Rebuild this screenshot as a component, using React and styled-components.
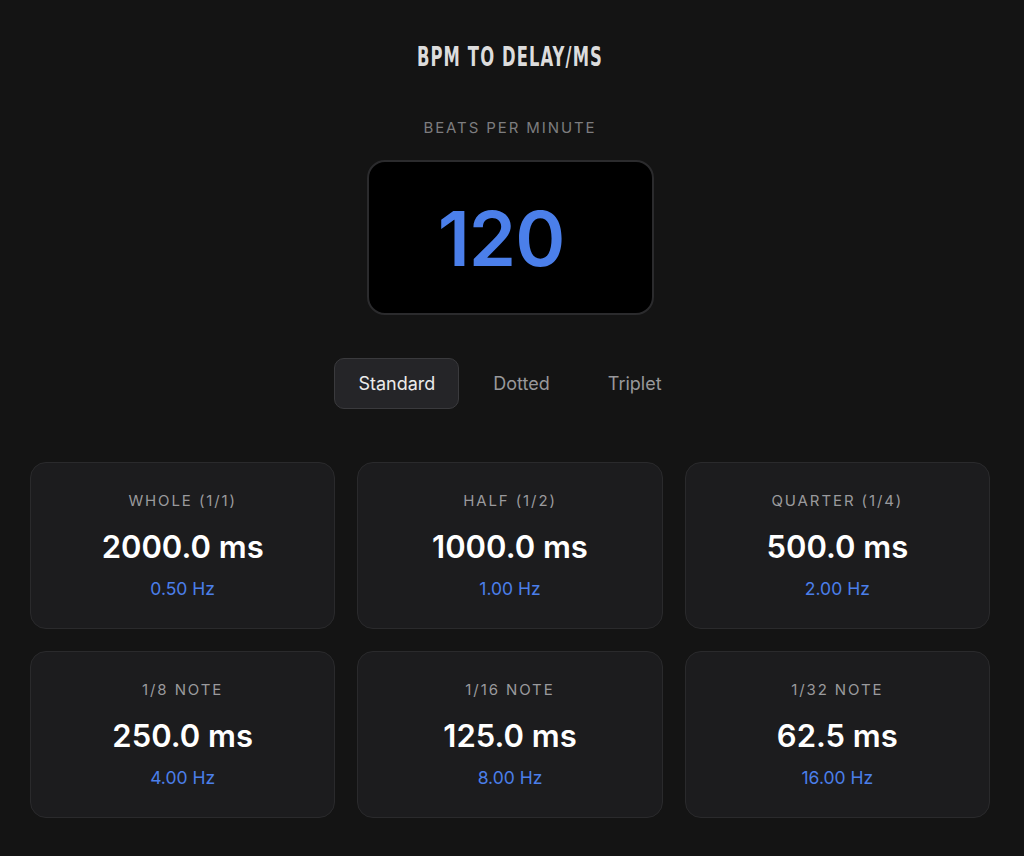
import React, { useState } from "react";
import styled, { createGlobalStyle } from "styled-components";

const GlobalStyle = createGlobalStyle`
  html, body {
    margin: 0;
    padding: 0;
    background: #141414;
  }
  body {
    font-family: Inter, "Noto Sans", sans-serif;
    color: #fff;
  }
`;

const Page = styled.div`
  min-height: 856px;
  box-sizing: border-box;
  padding: 44px 34px 0 30px;
  display: flex;
  flex-direction: column;
  align-items: center;
`;

// condensed display face isn't installed, so squeeze a condensed bold
const Title = styled.h1`
  margin: 0;
  font-family: "DejaVu Sans Condensed", "Liberation Sans", sans-serif;
  font-weight: 700;
  font-size: 26px;
  line-height: 26px;
  letter-spacing: 1.6px;
  color: #dcdcdc;
  transform: scaleX(0.7);
`;

const FieldLabel = styled.div`
  margin-top: 49px;
  font-size: 15px;
  line-height: 18px;
  letter-spacing: 1.9px;
  color: #7d7d7f;
`;

const BpmBox = styled.div`
  margin-top: 23px;
  width: 287px;
  height: 155px;
  box-sizing: border-box;
  border: 2px solid #2b2b2d;
  border-radius: 18px;
  background: #000;
  display: flex;
  align-items: center;
  justify-content: center;
  padding-right: 18px;
  font-size: 76px;
  font-weight: 600;
  color: #4b7fea;
  letter-spacing: -1px;
`;

const Tabs = styled.div`
  margin-top: 43px;
  display: flex;
  gap: 10px;
`;

const Tab = styled.button`
  height: 51px;
  padding: 0 23px;
  border-radius: 10px;
  font-family: inherit;
  font-size: 18px;
  cursor: pointer;
  border: 1px solid ${(p) => (p.$active ? "#3a3a3d" : "transparent")};
  background: ${(p) => (p.$active ? "#252528" : "transparent")};
  color: ${(p) => (p.$active ? "#ececec" : "#98989b")};
`;

const Grid = styled.div`
  margin-top: 53px;
  width: 100%;
  display: grid;
  grid-template-columns: repeat(3, 1fr);
  gap: 22px;
`;

const Card = styled.div`
  height: 167px;
  box-sizing: border-box;
  padding-top: 29px;
  border: 1px solid #2a2a2c;
  border-radius: 16px;
  background: #1c1c1e;
  display: flex;
  flex-direction: column;
  align-items: center;
`;

const CardLabel = styled.div`
  font-size: 15px;
  line-height: 18px;
  letter-spacing: 1.9px;
  color: #9a9a9d;
`;

const CardValue = styled.div`
  margin-top: 18px;
  font-size: 31px;
  line-height: 37px;
  font-weight: 600;
  color: #fff;
`;

const CardHz = styled.div`
  margin-top: 13px;
  font-size: 17.5px;
  line-height: 21px;
  color: #4b7fea;
`;

const notes = [
  { label: "WHOLE (1/1)", mult: 4 },
  { label: "HALF (1/2)", mult: 2 },
  { label: "QUARTER (1/4)", mult: 1 },
  { label: "1/8 NOTE", mult: 0.5 },
  { label: "1/16 NOTE", mult: 0.25 },
  { label: "1/32 NOTE", mult: 0.125 },
];

const modes = {
  Standard: 1,
  Dotted: 1.5,
  Triplet: 2 / 3,
};

export default function App() {
  const [bpm] = useState(120);
  const [mode, setMode] = useState("Standard");
  const beat = 60000 / bpm;

  return (
    <>
      <GlobalStyle />
      <Page>
        <Title>BPM TO DELAY/MS</Title>
        <FieldLabel>BEATS PER MINUTE</FieldLabel>
        <BpmBox>{bpm}</BpmBox>
        <Tabs>
          {Object.keys(modes).map((m) => (
            <Tab key={m} $active={mode === m} onClick={() => setMode(m)}>
              {m}
            </Tab>
          ))}
        </Tabs>
        <Grid>
          {notes.map((n) => {
            const ms = beat * n.mult * modes[mode];
            return (
              <Card key={n.label}>
                <CardLabel>{n.label}</CardLabel>
                <CardValue>{ms.toFixed(1)} ms</CardValue>
                <CardHz>{(1000 / ms).toFixed(2)} Hz</CardHz>
              </Card>
            );
          })}
        </Grid>
      </Page>
    </>
  );
}
